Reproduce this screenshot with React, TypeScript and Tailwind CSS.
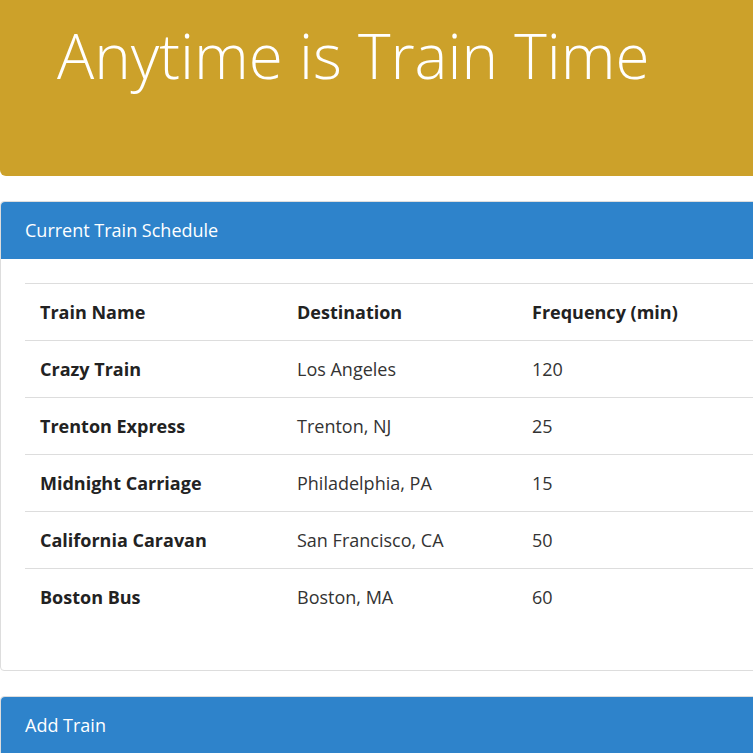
const trains = [
  { name: "Crazy Train", destination: "Los Angeles", frequency: "120" },
  { name: "Trenton Express", destination: "Trenton, NJ", frequency: "25" },
  { name: "Midnight Carriage", destination: "Philadelphia, PA", frequency: "15" },
  { name: "California Caravan", destination: "San Francisco, CA", frequency: "50" },
  { name: "Boston Bus", destination: "Boston, MA", frequency: "60" },
];

const App = () => {
  return (
    <div className="h-[753px] w-full overflow-hidden bg-white font-['Open_Sans',sans-serif]">
      <div className="w-[1100px]">
        {/* jumbotron */}
        <div className="h-[176px] rounded-bl-md bg-[#cca12a] pl-[57px] pt-[24px]">
          <h1 className="text-[62px] font-light leading-none text-white">Anytime is Train Time</h1>
        </div>

        {/* schedule panel */}
        <div className="mt-[25px] rounded border border-[#ddd]">
          <div className="flex h-[57px] items-center rounded-t bg-[#2e83cb] px-[24px] text-[18px] text-white">
            Current Train Schedule
          </div>
          <div className="px-[24px] pt-[24px] pb-[44px]">
            <table className="w-full table-fixed text-[18px] text-[#222]">
              <thead>
                <tr className="h-[57px] border-t border-[#ddd]">
                  <th className="w-[257px] pl-[15px] text-left font-bold">Train Name</th>
                  <th className="w-[235px] pl-[15px] text-left font-bold">Destination</th>
                  <th className="w-[250px] pl-[15px] text-left font-bold">Frequency (min)</th>
                  <th className="pl-[15px]"></th>
                </tr>
              </thead>
              <tbody>
                {trains.map((t) => (
                  <tr key={t.name} className="h-[57px] border-t border-[#ddd]">
                    <td className="pl-[15px] font-bold">{t.name}</td>
                    <td className="pl-[15px] text-[#333]">{t.destination}</td>
                    <td className="pl-[15px] text-[#333]">{t.frequency}</td>
                    <td className="pl-[15px]"></td>
                  </tr>
                ))}
              </tbody>
            </table>
          </div>
        </div>

        {/* add train panel */}
        <div className="mt-[25px] rounded border border-[#ddd]">
          <div className="flex h-[57px] items-center rounded-t bg-[#2e83cb] px-[24px] text-[18px] text-white">
            Add Train
          </div>
          <div className="h-[200px]"></div>
        </div>
      </div>
    </div>
  );
};

export default App;
